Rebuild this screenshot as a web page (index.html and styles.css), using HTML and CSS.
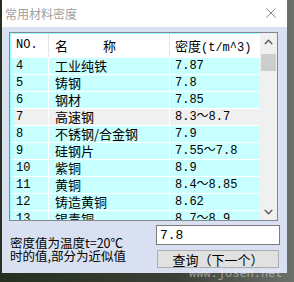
FILE: index.html
```html
<!DOCTYPE html>
<html lang="zh-CN">
<head>
    <meta charset="UTF-8">
    <title>常用材料密度</title>
    <link rel="stylesheet" href="styles.css">
</head>
<body>

    <div class="window">
        <div class="titlebar">
            <span class="title">常用材料密度</span>
            <svg class="close" width="10" height="10" viewBox="0 0 10 10">
                <path d="M0.5 0.5L9.5 9.5M9.5 0.5L0.5 9.5" stroke="#8a8a8a" stroke-width="1" fill="none"/>
            </svg>
        </div>

        <div class="content">
            <!-- список материалов -->
            <div class="listbox">
                <div class="table">
                    <div class="head num">NO.</div>
                    <div class="head"><span class="spread">名</span>称</div>
                    <div class="head">密度<span class="num">(t/m^3)</span></div>

                    <div class="num">4</div><div>工业纯铁</div><div class="num">7.87</div>
                    <div class="num">5</div><div>铸钢</div><div class="num">7.8</div>
                    <div class="num">6</div><div>钢材</div><div class="num">7.85</div>
                    <div class="num sel first">7</div><div class="sel">高速钢</div><div class="num sel">8.3～8.7</div>
                    <div class="num">8</div><div>不锈钢/合金钢</div><div class="num">7.9</div>
                    <div class="num">9</div><div>硅钢片</div><div class="num">7.55～7.8</div>
                    <div class="num">10</div><div>紫铜</div><div class="num">8.9</div>
                    <div class="num">11</div><div>黄铜</div><div class="num">8.4～8.85</div>
                    <div class="num">12</div><div>铸造黄铜</div><div class="num">8.62</div>
                    <div class="num">13</div><div>锡青铜</div><div class="num">8.7～8.9</div>
                </div>
                <div class="scroll">
                    <div class="arrow">
                        <svg width="9" height="6" viewBox="0 0 9 6"><path d="M0.8 5L4.5 1.3L8.2 5" stroke="#606060" stroke-width="1.6" fill="none"/></svg>
                    </div>
                    <div class="thumb"></div>
                    <div class="arrow down">
                        <svg width="9" height="6" viewBox="0 0 9 6"><path d="M0.8 1L4.5 4.7L8.2 1" stroke="#606060" stroke-width="1.6" fill="none"/></svg>
                    </div>
                </div>
            </div>

            <div class="bottom">
                <div class="note">密度值为温度t=20℃<br>时的值,部分为近似值</div>
                <div class="side">
                    <input class="value" type="text" value="7.8">
                    <button class="next">查询（下一个）</button>
                </div>
            </div>
        </div>
    </div>

    <div class="watermark">www.josen.net</div>

</body>
</html>
```

FILE: styles.css
```css
body {
    margin: 0;
    width: 294px;
    height: 282px;
    overflow: hidden;
    position: relative;
    font-family: "Noto Sans CJK SC", sans-serif;
    background: linear-gradient(90deg, #26301f 0%, #3b4036 60%, #6d706c 100%);
}
.window {
    margin-left: 2px;
    width: 285px;
    height: 273px;
    background-color: #d9e0f2;
}
.titlebar {
    height: 27px;
    background-color: #fff;
    display: flex;
    align-items: center;
    justify-content: space-between;
    padding: 0 11px 0 3px;
}
.title {
    font-size: 12px;
    color: #a0a0a0;
    line-height: 14px;
}
.close {
    display: block;
    margin-top: -1px;
}
.content {
    padding: 5px 7px 0 7px;
}
.listbox {
    box-sizing: border-box;
    width: 269px;
    height: 189px;
    border: 1px solid #828790;
    display: flex;
}
.table {
    box-sizing: border-box;
    width: 250px;
    height: 187px;
    overflow: hidden;
    border-left: 1px solid #99ffff;
    border-top: 1px solid #99ffff;
    background-color: #fff;
    display: grid;
    grid-template-columns: 37px 120px 90px;
    grid-template-rows: 23px;
    grid-auto-rows: 16px;
    gap: 1px;
    align-content: start;
}
.table div {
    background-color: #c8ffff;
    font-size: 13px;
    line-height: 16px;
    padding-left: 6px;
    white-space: nowrap;
    color: #000;
}
.table div:nth-child(3n+1) {
    padding-left: 5px;
}
.table div:nth-child(3n) {
    padding-left: 5px;
}
.table .head {
    background-color: #fff;
    line-height: 23px;
    box-shadow: 1px 0 0 #e3e3e3;
}
.num {
    font-family: "Liberation Mono", "Noto Sans CJK SC", monospace;
    font-size: 12px;
}
.table .num {
    font-size: 12px;
}
.spread {
    display: inline-block;
    width: 48px;
}
.table .sel {
    background-color: #f0f0f0;
}
.table .first {
    box-shadow: inset 5px 0 0 #c8ffff;
}
.scroll {
    width: 17px;
    background-color: #f0f0f0;
    display: flex;
    flex-direction: column;
}
.arrow {
    height: 17px;
    display: flex;
    align-items: center;
    justify-content: center;
}
.arrow svg {
    display: block;
}
.thumb {
    margin: 4px 1px 0 1px;
    height: 17px;
    background-color: #cdcdcd;
}
.down {
    margin-top: auto;
}
.bottom {
    display: flex;
    justify-content: space-between;
    margin-top: 4px;
}
.note {
    margin-top: 11px;
    padding-left: 1px;
    font-size: 12.5px;
    line-height: 13px;
    color: #000;
}
.side {
    width: 124px;
}
.value {
    box-sizing: border-box;
    display: block;
    width: 124px;
    height: 20px;
    margin: 0;
    padding: 0 0 0 3px;
    border: 1px solid #7a7a7a;
    background-color: #fff;
    font-family: "Liberation Mono", monospace;
    font-size: 13px;
    color: #000;
    outline: none;
}
.next {
    box-sizing: border-box;
    display: block;
    width: 122px;
    height: 18px;
    margin: 5px 0 0 1px;
    padding: 0;
    border: 1px solid #adadad;
    background-color: #e1e1e1;
    font-family: "Noto Sans CJK SC", sans-serif;
    font-size: 13px;
    line-height: 15px;
    color: #000;
}
.watermark {
    position: absolute;
    left: 189px;
    top: 268px;
    font-family: "Liberation Mono", monospace;
    font-size: 12px;
    line-height: 12px;
    color: rgba(255, 255, 255, 0.45);
}
```
